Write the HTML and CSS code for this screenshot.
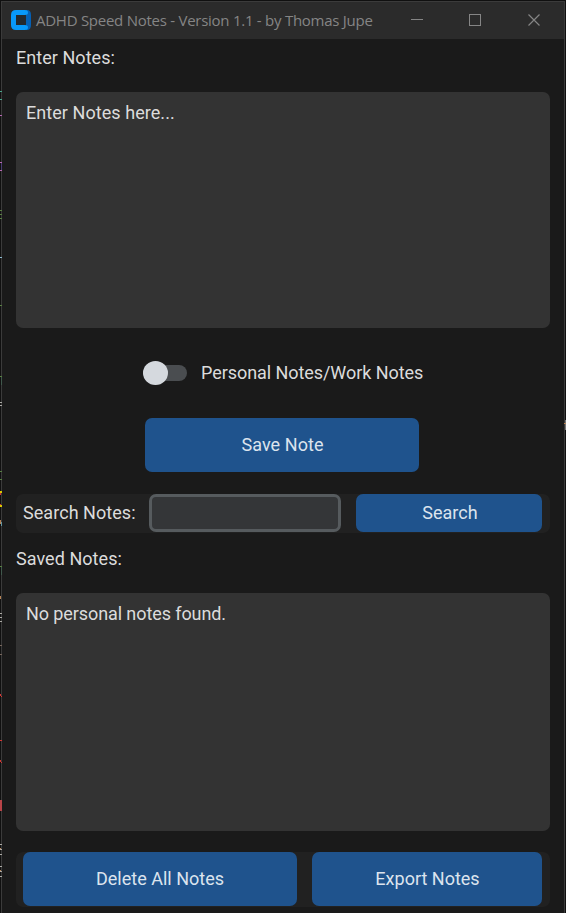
FILE: index.html
```
<!DOCTYPE html>
<html lang="en">
<head>
<meta charset="utf-8">
<title>ADHD Speed Notes</title>
<link rel="stylesheet" href="styles.css">
</head>
<body>
<main class="window">
  <header class="titlebar">
    <svg class="logo" width="20" height="20" viewBox="0 0 20 20">
      <path d="M15 0h1q4 0 4 5v10q0 5-4 5h-1z" fill="#0560b5"/>
      <path d="M5 0h9q3 0 3 2.500T14 5H5v10h9q3 0 3 2.500T14 20H5q-5 0-5-5V5q0-5 5-5z" fill="#0899fb"/>
      <rect x="5" y="5" width="10" height="10" rx="1.500" fill="#242a30"/>
    </svg>
    <h1 class="title">ADHD Speed Notes - Version 1.1 - by Thomas Jupe</h1>
    <svg class="controls" width="130" height="12" viewBox="0 0 130 12" fill="none" stroke="#858585">
      <path d="M0 5.500h12M58.500.500h11v11h-11z" shape-rendering="crispEdges"/>
      <path d="M117.500.500l11 11m0-11l-11 11" stroke-width="1.200"/>
    </svg>
  </header>
  <section class="content">
    <div class="label">Enter Notes:</div>
    <div class="textbox entry">Enter Notes here...</div>
    <div class="mode">
      <span class="switch"><span class="knob"></span></span>
      <span class="mode-label">Personal Notes/Work Notes</span>
    </div>
    <button class="button save">Save Note</button>
    <div class="panel search">
      <span class="search-label">Search Notes:</span>
      <input class="field" type="text" aria-label="Search Notes">
      <button class="button find">Search</button>
    </div>
    <div class="label">Saved Notes:</div>
    <div class="textbox saved">No personal notes found.</div>
    <div class="panel actions">
      <button class="button delete">Delete All Notes</button>
      <button class="button export">Export Notes</button>
    </div>
  </section>
</main>
<svg class="backdrop" width="566" height="913" viewBox="0 0 566 913" shape-rendering="crispEdges">
  <path d="M0 91h2v1H0zM0 99h2v1H0z" fill="#49a58c"/>
  <path d="M0 115h2v1H0zM0 162h2v1H0zM0 170h2v1H0z" fill="#b767b2"/>
  <path d="M1 163h1v7H1z" fill="#493d72"/>
  <path d="M0 210h2v1H0zM0 214h2v1H0zM0 218h2v1H0zM0 305h2v1H0zM0 376h2v1H0zM0 471h2v1H0zM0 479h2v1H0zM0 566h2v1H0z" fill="#587f43"/>
  <path d="M0 257h2v1H0z" fill="#8dbbd0"/>
  <path d="M1 377h1v8H1zM1 567h1v8H1z" fill="#40584c"/>
  <path d="M0 402h2v1H0zM0 405h2v1H0zM0 613h2v1H0zM0 617h2v1H0zM0 621h2v1H0zM0 844h2v1H0zM0 849h2v1H0zM0 854h2v1H0zM0 866h2v1H0zM0 871h2v1H0zM0 876h2v1H0z" fill="#aaa9a4"/>
  <path d="M0 491h2v2H0zM0 505h2v2H0z" fill="#d9c900"/>
  <path d="M0 493h1v2H0zM0 504h1v1H0zM0 694h1v2H0zM1 696h1v1H1zM0 740h2v1H0zM0 760h1v2H0zM1 762h1v1H1z" fill="#d83432"/>
  <path d="M0 520h1v4H0zM0 596h1v3H0zM0 848h1v1H0zM0 870h1v1H0zM564 423h2v1h-2z" fill="#b88354"/>
  <path d="M1 522h1v4H1z" fill="#6295a2"/>
  <path d="M0 645h2v1H0zM0 654h2v1H0z" fill="#77665c"/>
  <path d="M0 800h2v11H0z" fill="#b84448"/>
  <path d="M565 420h1v3h-1zM565 424h1v6h-1z" fill="#777"/>
</svg>
</body>
</html>
```
FILE: styles.css
```
* {
  box-sizing: border-box;
}

body {
  margin: 0;
  padding: 1px 1px 0;
  height: 913px;
  overflow: hidden;
  background: #101010;
  color: #dce4ee;
  font: 18px/22px Roboto, "Liberation Sans", sans-serif;
}

.window {
  height: 912px;
  border: 1px solid #3b3b3b;
  border-bottom: 0;
  background: #1a1a1a;
}

.titlebar {
  display: flex;
  align-items: center;
  height: 37px;
  padding: 0 23px 0 9px;
  background: #2b2b2b;
}

.logo {
  flex: none;
  margin-top: -1px;
}

.title {
  margin: -2px 0 0 5px;
  white-space: nowrap;
  color: #858585;
  font: 15px/20px "Open Sans", "Noto Sans", sans-serif;
  letter-spacing: -0.26px;
}

.controls {
  flex: none;
  margin-left: auto;
  margin-top: -1px;
}

.content {
  display: flex;
  flex-direction: column;
  padding: 8px 14px 0;
}

.label {
  height: 45px;
  color: #dcdcdc;
  letter-spacing: 0.05px;
}

.textbox {
  padding: 10px;
  border-radius: 7px;
  background: #333;
  color: #dcdcdc;
}

.entry {
  height: 236px;
  letter-spacing: 0.06px;
}

.mode {
  display: flex;
  align-items: center;
  gap: 14px;
  height: 24px;
  margin: 33px 0 33px 127px;
  color: #dcdcdc;
}

.mode-label {
  letter-spacing: -0.06px;
}

.switch {
  display: flex;
  align-items: center;
  width: 44px;
  height: 16px;
  border-radius: 8px;
  background: #4a4d50;
}

.knob {
  width: 25px;
  height: 24px;
  flex: none;
  border-radius: 50%;
  background: #d5d9de;
}

.button {
  flex: none;
  padding: 0;
  border: 0;
  border-radius: 7px;
  background: #1f538d;
  color: #dce4ee;
  font: inherit;
}

.save {
  align-self: center;
  width: 274px;
  height: 54px;
  margin-right: 2px;
  padding-left: 1px;
  letter-spacing: 0.06px;
}

.panel {
  display: flex;
  border-radius: 7px;
  background: #212121;
}

.search {
  height: 39px;
  margin: 22px 0 15px;
  padding-left: 7px;
}

.search-label {
  width: 126px;
  padding-top: 8px;
  color: #dcdcdc;
  letter-spacing: 0.05px;
}

.field {
  width: 192px;
  height: 38px;
  padding: 0 8px;
  border: 3px solid #565b5e;
  border-radius: 7px;
  outline: 0;
  background: #343638;
  color: inherit;
  font: inherit;
}

.find {
  width: 186px;
  height: 38px;
  margin-left: 15px;
  padding-left: 2px;
}

.saved {
  height: 238px;
  letter-spacing: -0.09px;
}

.actions {
  gap: 15px;
  height: 55px;
  margin-top: 21px;
  padding-left: 7px;
}

.delete {
  width: 274px;
  height: 54px;
}

.export {
  width: 230px;
  height: 54px;
  padding-left: 1px;
}

.backdrop {
  position: absolute;
  top: 0;
  left: 0;
  pointer-events: none;
}
```
